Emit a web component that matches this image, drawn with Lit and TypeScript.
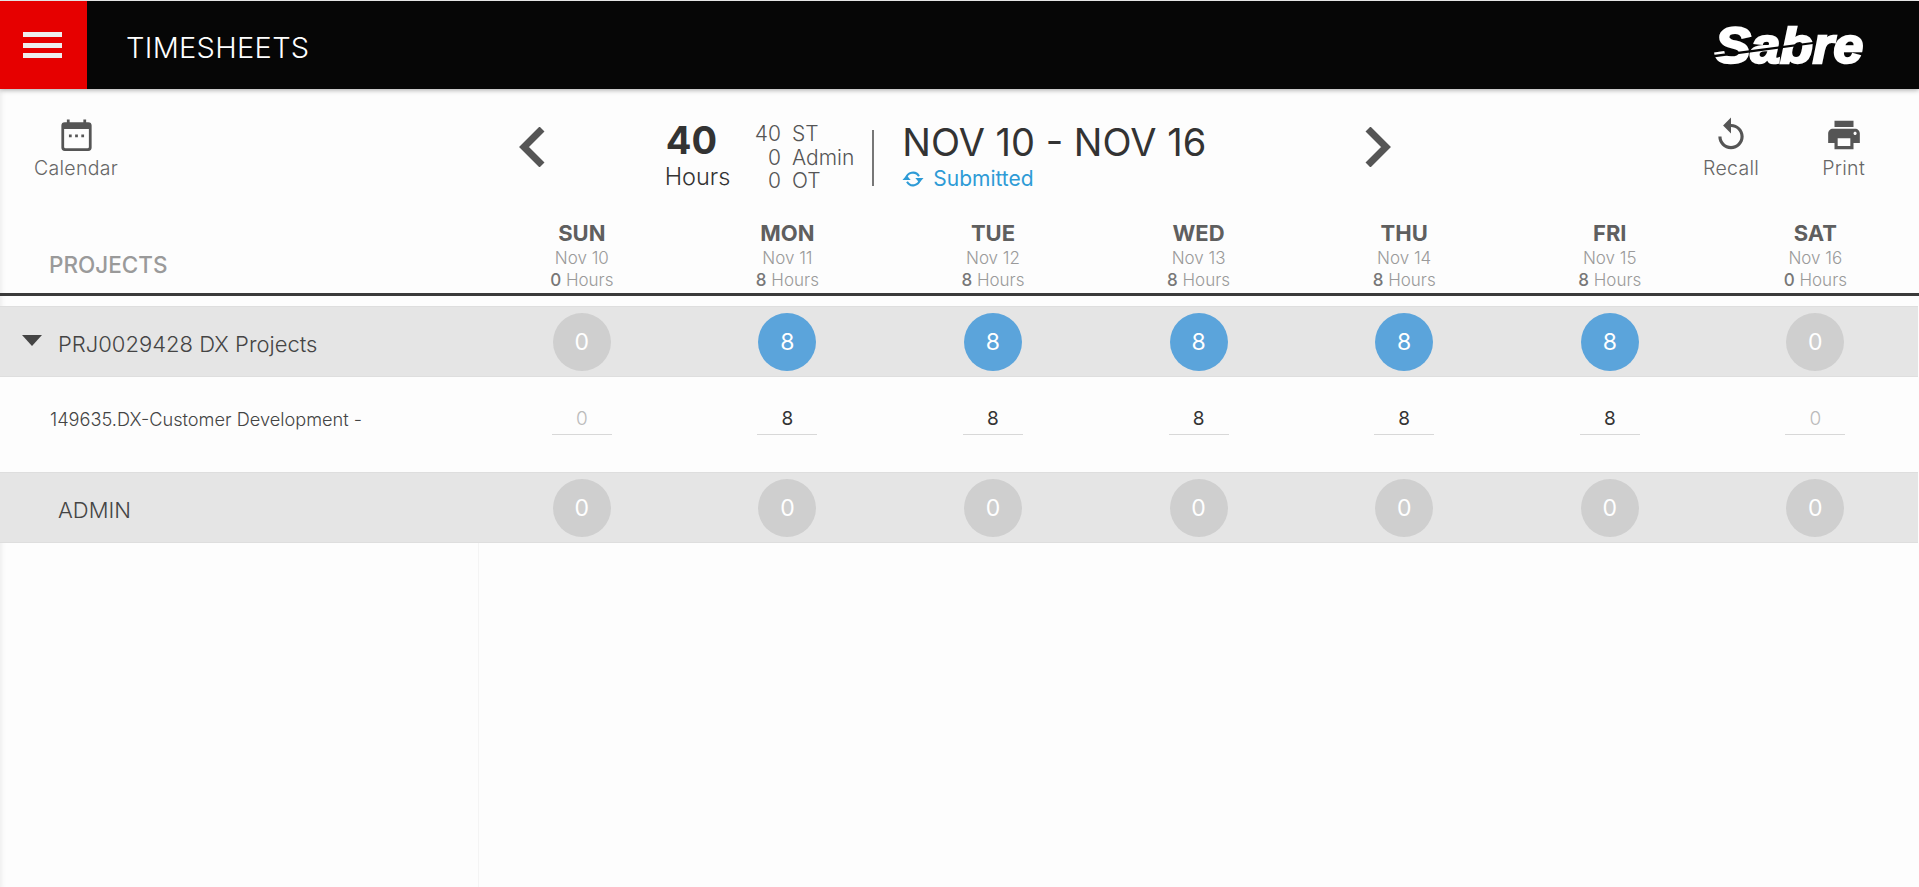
import { LitElement, css, html, svg } from "lit";
import { customElement } from "lit/decorators.js";

const days = [
  { name: "SUN", date: "Nov 10", hours: 0 },
  { name: "MON", date: "Nov 11", hours: 8 },
  { name: "TUE", date: "Nov 12", hours: 8 },
  { name: "WED", date: "Nov 13", hours: 8 },
  { name: "THU", date: "Nov 14", hours: 8 },
  { name: "FRI", date: "Nov 15", hours: 8 },
  { name: "SAT", date: "Nov 16", hours: 0 },
];

const icon = (size: number, body: unknown, view = "0 0 24 24") => html`
  <svg width=${size} height=${size} viewBox=${view} fill="currentColor">${body}</svg>
`;

const calendarIcon = svg`<path fill-rule="evenodd" d="M5 1h2v2h10V1h2v2h1.500A2.500 2.500 0 0 1 23 5.500v16a2.500 2.500 0 0 1-2.500 2.500h-17A2.500 2.500 0 0 1 1 21.500v-16A2.500 2.500 0 0 1 3.500 3H5V1zM3 8v13a1 1 0 0 0 1 1h16a1 1 0 0 0 1-1V8H3z"/><path d="M6.500 12h2v2h-2zM11 12h2v2h-2zM15.500 12h2v2h-2z"/>`;
const recallIcon = svg`<path d="M12 5V1L7 6l5 5V7c3.310 0 6 2.690 6 6s-2.690 6-6 6-6-2.690-6-6H4c0 4.420 3.580 8 8 8s8-3.580 8-8-3.580-8-8-8z"/>`;
const printIcon = svg`<path d="M19 8H5c-1.660 0-3 1.340-3 3v6h4v4h12v-4h4v-6c0-1.660-1.340-3-3-3zm-3 11H8v-5h8v5zm3-7c-.550 0-1-.450-1-1s.450-1 1-1 1 .450 1 1-.450 1-1 1zm-1-9H6v4h12V3z"/>`;
const syncIcon = svg`
  <path d="M4.500 11.500A7.500 7.500 0 0 1 18.500 9" fill="none" stroke="currentColor" stroke-width="2.200"/>
  <path d="M19.500 12.500A7.500 7.500 0 0 1 5.500 15" fill="none" stroke="currentColor" stroke-width="2.200"/>
  <path d="M14.500 11h9l-4.500 5zM.5 13h9l-4.500-5z"/>
`;

@customElement("app-root")
export class AppRoot extends LitElement {
  static override styles = css`
    :host {
      display: block;
      height: 887px;
      overflow: hidden;
      background: #fdfdfd;
      font-family: Inter, "Liberation Sans", sans-serif;
      color: #555;
      box-shadow: inset 6px 0 6px -6px #e4e4e4;
    }
    .top {
      display: flex;
      align-items: center;
      height: 88px;
      margin-top: 1px;
      background: #060606;
      color: #fff;
      box-shadow: 0 1px 5px rgba(0, 0, 0, 0.35);
      position: relative;
    }
    .menu {
      width: 87px;
      height: 88px;
      flex: none;
      background: #e60000;
      display: flex;
      flex-direction: column;
      justify-content: center;
      gap: 5.500px;
      padding-left: 23px;
      box-sizing: border-box;
    }
    .menu i {
      display: block;
      width: 39px;
      height: 5px;
      background: #eee;
    }
    .title {
      margin-left: 39px;
      padding-top: 5px;
      font-size: 29px;
      font-weight: 300;
      letter-spacing: 0.3px;
    }
    .logo {
      margin-left: auto;
      margin-right: 52px;
      display: block;
      overflow: visible;
    }
    .logo text {
      font-family: "Liberation Sans", sans-serif;
      font-weight: 700;
      font-style: italic;
    }
    .tools {
      display: grid;
      grid-template-columns: 478px 1fr 300px;
      height: 116px;
    }
    .tool {
      display: flex;
      flex-direction: column;
      align-items: center;
      font-size: 19.500px;
      font-weight: 300;
      letter-spacing: 0.3px;
      color: #666;
      line-height: 24px;
    }
    .tool svg {
      color: #555;
      display: block;
      margin-bottom: 2px;
    }
    .left {
      padding: 29px 0 0 34px;
      display: flex;
    }
    .left .tool svg {
      margin-bottom: 5px;
    }
    .right {
      padding: 27px 0 0 0;
      display: flex;
      justify-content: flex-end;
      gap: 63px;
      margin-right: 54px;
    }
    .center {
      display: flex;
      align-items: flex-start;
      padding-left: 41px;
    }
    .nav {
      color: #555;
      margin-top: 38px;
      display: block;
    }
    .total {
      width: 120px;
      margin-left: 87px;
      margin-top: 31px;
      display: flex;
      flex-direction: column;
      align-items: center;
      color: #333;
    }
    .total b {
      font-size: 38px;
      line-height: 40px;
      font-weight: 700;
      margin-right: 5px;
    }
    .total span {
      font-size: 23.500px;
      line-height: 34px;
      font-weight: 300;
      margin-left: 7px;
    }
    .split {
      margin-left: -13px;
      margin-top: 33px;
      display: grid;
      grid-template-columns: 40px auto;
      column-gap: 11px;
      font-size: 21px;
      line-height: 23.500px;
      font-weight: 300;
      color: #555;
    }
    .split span:nth-child(odd) {
      text-align: right;
    }
    .week {
      margin-top: 41px;
      margin-left: 18px;
      padding-left: 28px;
      border-left: 2px solid #777;
      height: 56px;
      width: 461px;
    }
    .week h2 {
      margin: -11px 0 0;
      font-size: 38px;
      line-height: 46px;
      font-weight: 400;
      color: #333;
      white-space: nowrap;
    }
    .status {
      display: flex;
      align-items: center;
      gap: 9px;
      color: #2e9bd6;
      font-size: 21px;
      font-weight: 400;
      line-height: 24px;
      margin-top: 2px;
    }
    .days {
      display: grid;
      grid-template-columns: 479px repeat(7, 205.600px);
      height: 91px;
      box-sizing: border-box;
      border-bottom: 3px solid #3a3a3a;
      width: 1919px;
    }
    .projects {
      font-size: 22.500px;
      font-weight: 500;
      color: #9a9a9a;
      padding: 47px 0 0 49px;
      line-height: 26px;
    }
    .day {
      display: flex;
      flex-direction: column;
      align-items: center;
      color: #9a9a9a;
      font-size: 17px;
      font-weight: 300;
      line-height: 22px;
      padding-top: 14px;
    }
    .day b {
      font-size: 22px;
      line-height: 28px;
      font-weight: 700;
      color: #5f5f5f;
    }
    .day em {
      font-style: normal;
      font-weight: 500;
      color: #777;
    }
    .rows {
      margin-top: 10px;
      width: 1918px;
      height: 591px;
      background: linear-gradient(#f4f4f4, #f4f4f4) 478px 0 / 1px 100% no-repeat;
    }
    .row {
      display: grid;
      grid-template-columns: 479px repeat(7, 205.600px);
      align-items: center;
      box-sizing: border-box;
    }
    .group {
      height: 71px;
      background: #e5e5e5;
      border-top: 1px solid #dedede;
      border-bottom: 1px solid #dedede;
    }
    .task {
      height: 95px;
      background: #fdfdfd;
      align-items: flex-start;
    }
    .name {
      display: flex;
      align-items: center;
      font-size: 22px;
      font-weight: 300;
      color: #444;
      padding: 4px 0 0 58px;
      position: relative;
    }
    .caret {
      position: absolute;
      left: 22px;
      top: 50%;
      margin-top: -7px;
      border-left: 10px solid transparent;
      border-right: 10px solid transparent;
      border-top: 11px solid #444;
    }
    .task .name {
      padding: 31px 0 0 50px;
      font-size: 18.200px;
      color: #444;
    }
    .cell {
      display: flex;
      justify-content: center;
    }
    .bubble {
      width: 58px;
      height: 58px;
      margin-top: 1px;
      border-radius: 50%;
      display: flex;
      align-items: center;
      justify-content: center;
      background: #cfcfcf;
      color: #fff;
      font-size: 23px;
      font-weight: 400;
    }
    .bubble.on {
      background: #5ba4db;
    }
    .hours {
      width: 60px;
      height: 58px;
      padding-top: 25px;
      box-sizing: border-box;
      text-align: center;
      border-bottom: 1px solid #d8d8d8;
      font-size: 19px;
      line-height: 33px;
      color: #333;
    }
    .hours.zero {
      color: #bbb;
      font-weight: 300;
    }
  `;

  private bubbles(values: number[]) {
    return values.map(
      (v) => html`<div class="cell"><div class="bubble ${v ? "on" : ""}">${v}</div></div>`,
    );
  }

  override render() {
    const hours = days.map((d) => d.hours);
    return html`
      <div class="top">
        <div class="menu"><i></i><i></i><i></i></div>
        <div class="title">TIMESHEETS</div>
        <svg class="logo" width="154" height="44" viewBox="0 0 154 44">
          <text x="2" y="40" fill="#fff" stroke="#fff" stroke-width="2.500" font-size="50" textLength="148" lengthAdjust="spacingAndGlyphs">Sabre</text>
          <path d="M0 32 L100 19 L100 21 L0 34.500z" fill="#060606" />
        </svg>
      </div>

      <div class="tools">
        <div class="left">
          <div class="tool">${icon(33, calendarIcon)}<span>Calendar</span></div>
        </div>
        <div class="center">
          <svg class="nav" width="28" height="40" viewBox="0 0 28 40">
            <path d="M23 2 L5 20 L23 38" fill="none" stroke="currentColor" stroke-width="7" />
          </svg>
          <div class="total"><b>40</b><span>Hours</span></div>
          <div class="split">
            <span>40</span><span>ST</span>
            <span>0</span><span>Admin</span>
            <span>0</span><span>OT</span>
          </div>
          <div class="week">
            <h2>NOV 10 - NOV 16</h2>
            <div class="status">${icon(22, syncIcon)}<span>Submitted</span></div>
          </div>
          <svg class="nav" width="28" height="40" viewBox="0 0 28 40">
            <path d="M5 2 L23 20 L5 38" fill="none" stroke="currentColor" stroke-width="7" />
          </svg>
        </div>
        <div class="right">
          <div class="tool">${icon(38, recallIcon)}<span>Recall</span></div>
          <div class="tool">${icon(38, printIcon)}<span>Print</span></div>
        </div>
      </div>

      <div class="days">
        <div class="projects">PROJECTS</div>
        ${days.map(
          (d) => html`<div class="day">
            <b>${d.name}</b><span>${d.date}</span><span><em>${d.hours}</em> Hours</span>
          </div>`,
        )}
      </div>

      <div class="rows">
        <div class="row group">
          <div class="name"><i class="caret"></i>PRJ0029428 DX Projects</div>
          ${this.bubbles(hours)}
        </div>
        <div class="row task">
          <div class="name">149635.DX-Customer Development -</div>
          ${hours.map(
            (v) => html`<div class="cell"><div class="hours ${v ? "" : "zero"}">${v}</div></div>`,
          )}
        </div>
        <div class="row group">
          <div class="name">ADMIN</div>
          ${this.bubbles([0, 0, 0, 0, 0, 0, 0])}
        </div>
      </div>
    `;
  }
}
